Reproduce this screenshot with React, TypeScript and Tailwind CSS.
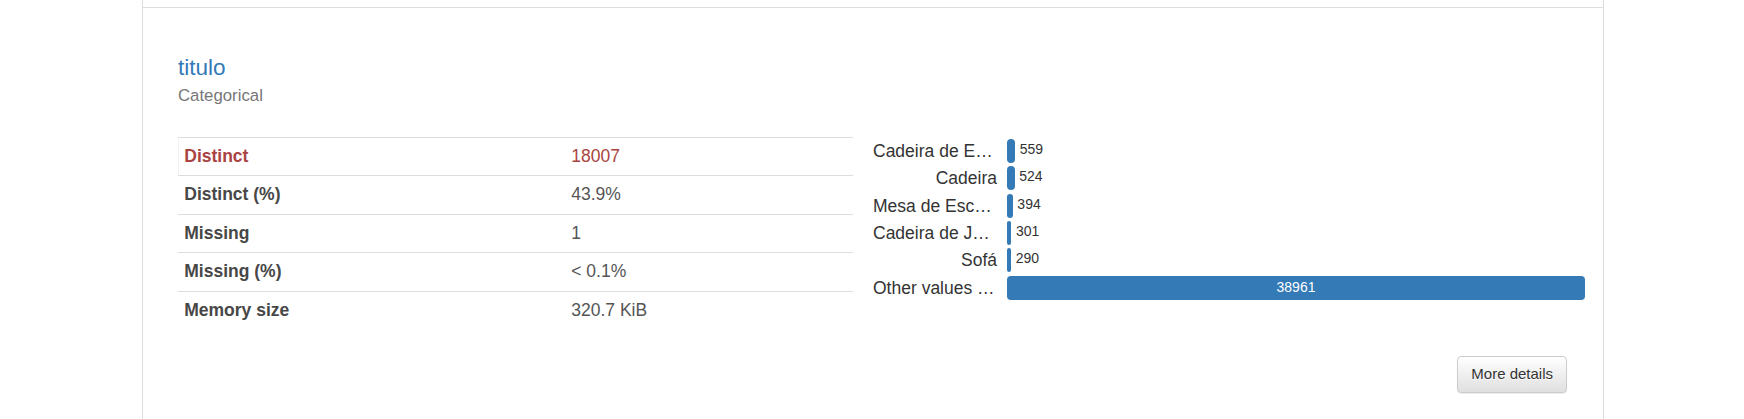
import React from 'react'

const stats = [
  { label: 'Distinct', value: '18007', alert: true },
  { label: 'Distinct (%)', value: '43.9%' },
  { label: 'Missing', value: '1' },
  { label: 'Missing (%)', value: '< 0.1%' },
  { label: 'Memory size', value: '320.7 KiB' },
]

const freqs = [
  { label: 'Cadeira de E…', count: 559, cut: true },
  { label: 'Cadeira', count: 524 },
  { label: 'Mesa de Esc…', count: 394, cut: true },
  { label: 'Cadeira de J…', count: 301, cut: true },
  { label: 'Sofá', count: 290 },
  { label: 'Other values …', count: 38961, cut: true, other: true },
]

const BAR_AREA = 578
const MAX = 38961

const StatsTable = () => (
  <div className="w-[675px] shrink-0">
    {stats.map((s) => (
      <div
        key={s.label}
        className={`flex border-t border-[#ddd] py-[6.25px] leading-[25px] text-[17.5px] ${
          s.alert ? 'text-[#a94442] shadow-[inset_1px_0_0_#f2f2f2]' : ''
        }`}
      >
        <div className={`w-[387px] pl-[6.25px] font-bold ${s.alert ? '' : 'text-[#474747]'}`}>{s.label}</div>
        <div className={`pl-[6.25px] ${s.alert ? '' : 'text-[#555]'}`}>{s.value}</div>
      </div>
    ))}
  </div>
)

const FreqChart = () => (
  <div className="ml-[20px] shrink-0 pt-[2.6px] flex flex-col gap-[3.35px]">
    {freqs.map((f) => {
      const w = Math.max(4, (f.count / MAX) * BAR_AREA)
      return (
        <div key={f.label} className="flex h-[24px] items-center">
          <div
            className={`w-[124px] text-[17.5px] leading-[24px] text-[#333] whitespace-nowrap ${
              f.cut ? 'text-left' : 'text-right'
            }`}
          >
            {f.label}
          </div>
          <div className="ml-[10px] flex w-[578px] items-center h-full">
            {f.other ? (
              <div className="flex h-full w-full items-center justify-center rounded-[4px] bg-[#337ab7] text-[14px] text-white">
                {f.count}
              </div>
            ) : (
              <>
                <div className="h-full rounded-[4px] bg-[#337ab7]" style={{ width: w }} />
                <span className="ml-[4.5px] pb-[4px] text-[14px] leading-[16px] text-[#333]">{f.count}</span>
              </>
            )}
          </div>
        </div>
      )
    })}
  </div>
)

export default function App() {
  return (
    <div className="h-[419px] w-full overflow-hidden bg-white font-['Liberation_Sans',Arial,sans-serif]">
      <div className="ml-[142px] h-[419px] w-[1462px] border-x border-[#ddd]">
        <div className="h-[7px]" />
        <div className="border-t border-[#ddd] pl-[35px] pr-[36px] pt-[47px]">
          <div className="text-[22.5px] leading-[25px] text-[#337ab7]">titulo</div>
          <div className="mt-[3.5px] text-[16.8px] leading-[24px] text-[#777]">Categorical</div>

          <div className="mt-[29px] flex">
            <StatsTable />
            <FreqChart />
          </div>

          <div className="mt-[27px] flex justify-end">
            <button className="h-[36.5px] rounded-[4px] border border-[#ccc] bg-gradient-to-b from-white to-[#e0e0e0] px-[13px] text-[15px] leading-[22.5px] text-[#333] shadow-[0_1px_1px_rgba(0,0,0,0.075)] [text-shadow:0_1px_0_#fff]">
              More details
            </button>
          </div>
        </div>
      </div>
    </div>
  )
}
